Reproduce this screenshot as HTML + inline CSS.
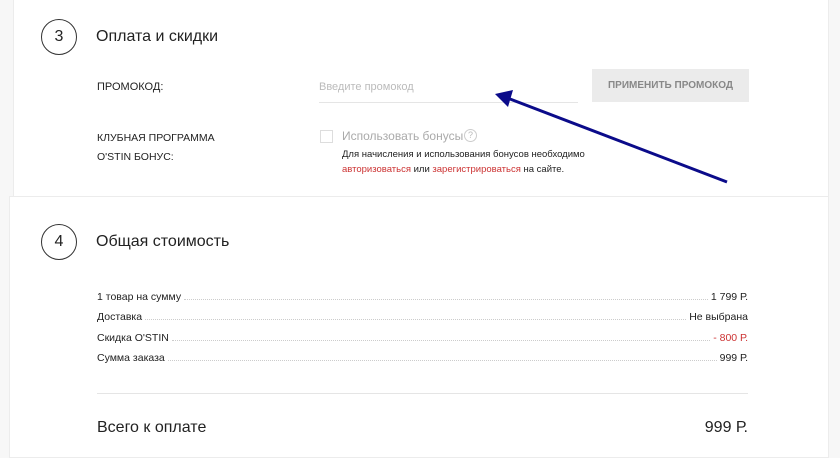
<!DOCTYPE html>
<html><head><meta charset="utf-8"><style>
body{margin:0;width:840px;height:440px;background:#f7f7f7;font-family:"Liberation Sans","Noto Sans CJK SC",sans-serif;color:#222;position:relative;overflow:hidden}
.p{position:absolute;background:#fff;border:1px solid #ececec}
.a{position:absolute;white-space:nowrap}
.c{position:absolute;width:34px;height:34px;border:1px solid #333;border-radius:50%;text-align:center;line-height:34px;font-size:16px}
.row{position:absolute;left:97px;width:651px;font-size:10.5px;display:flex;align-items:baseline}
.row .d{flex:1;border-bottom:1px dotted #ccc;margin:0 3px}
</style></head><body>
<div class="p" style="left:13px;top:-2px;width:814px;height:197px"></div>
<div class="p" style="left:9px;top:196px;width:818px;height:260px"></div>
<div class="c" style="left:41px;top:19px">3</div>
<div class="a" style="left:96px;top:28px;font-size:16px">Оплата и скидки</div>
<div class="a" style="left:97px;top:81px;font-size:11px">ПРОМОКОД:</div>
<div class="a" style="left:319px;top:81px;font-size:11px;color:#bbb">Введите промокод</div>
<div class="a" style="left:319px;top:102px;width:259px;height:1px;background:#e5e5e5"></div>
<div class="a" style="left:592px;top:69px;width:157px;height:33px;background:#ebebeb;color:#888;font-weight:bold;font-size:10px;text-align:center;line-height:33px">ПРИМЕНИТЬ ПРОМОКОД</div>
<div class="a" style="left:97px;top:129px;font-size:10.5px;line-height:19px">КЛУБНАЯ ПРОГРАММА<br>O'STIN БОНУС:</div>
<div class="a" style="left:320px;top:130px;width:11px;height:11px;border:1px solid #ddd"></div>
<div class="a" style="left:342px;top:129px;font-size:12px;color:#aaa">Использовать бонусы</div>
<div class="a" style="left:464px;top:129px;width:11px;height:11px;border:1px solid #ccc;border-radius:50%;font-size:9px;color:#bbb;text-align:center;line-height:11px">?</div>
<div class="a" style="left:342px;top:147px;font-size:9.5px;line-height:15px">Для начисления и использования бонусов необходимо<br><span style="color:#c33">авторизоваться</span> или <span style="color:#c33">зарегистрироваться</span> на сайте.</div>
<div class="c" style="left:41px;top:224px">4</div>
<div class="a" style="left:96px;top:233px;font-size:16px">Общая стоимость</div>
<div class="row" style="top:291px">1 товар на сумму<span class="d"></span>1 799 Р.</div>
<div class="row" style="top:311px">Доставка<span class="d"></span>Не выбрана</div>
<div class="row" style="top:332px">Скидка O'STIN<span class="d"></span><span style="color:#c33">- 800 Р.</span></div>
<div class="row" style="top:352px">Сумма заказа<span class="d"></span>999 Р.</div>
<div class="a" style="left:97px;top:393px;width:651px;height:1px;background:#e5e5e5"></div>
<div class="a" style="left:97px;top:419px;font-size:16px">Всего к оплате</div>
<div class="a" style="left:700px;top:419px;width:48px;text-align:right;font-size:16px">999 Р.</div>
<svg class="a" style="left:0;top:0" width="840" height="440"><line x1="727" y1="182" x2="510" y2="99" stroke="#0b0b8a" stroke-width="3"/><polygon points="495,94 513,90 508,107" fill="#0b0b8a"/></svg>
</body></html>
